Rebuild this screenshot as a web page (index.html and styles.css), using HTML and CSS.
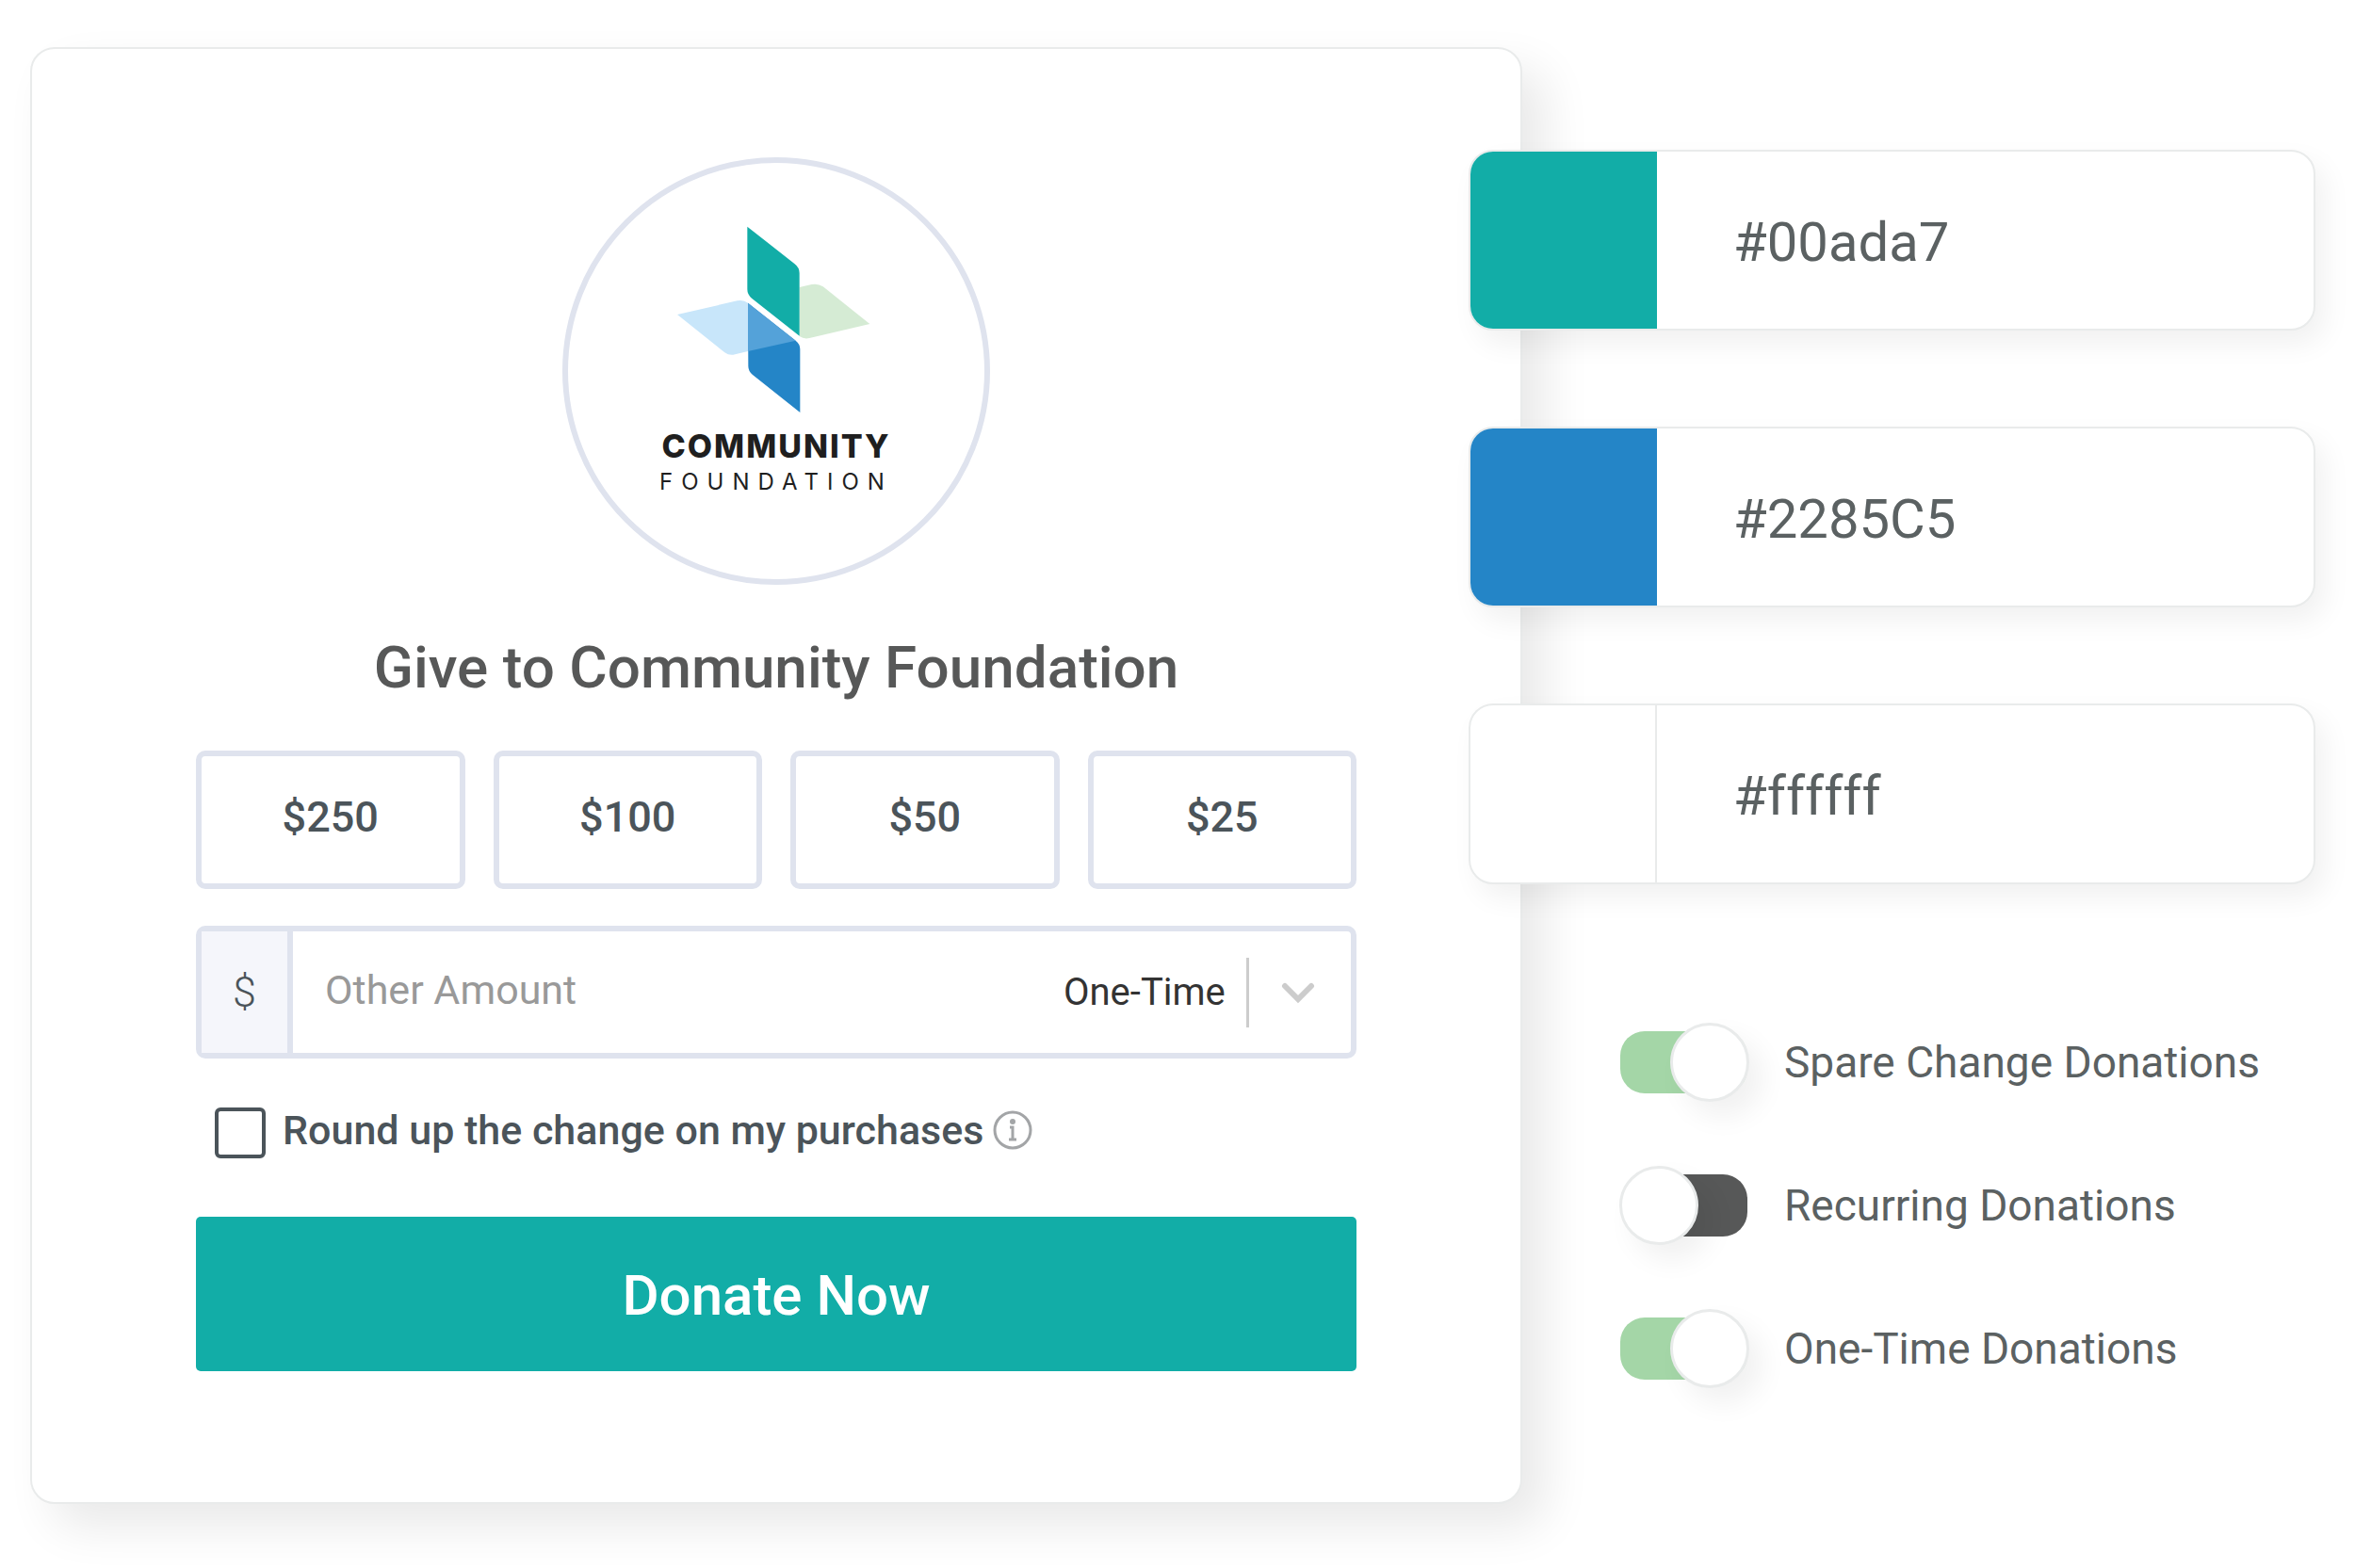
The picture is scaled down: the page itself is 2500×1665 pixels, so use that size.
FILE: index.html
```
<!DOCTYPE html>
<html lang="en">
  <head>
    <meta charset="UTF-8" />
    <meta name="viewport" content="width=device-width, initial-scale=1.0" />
    <title>Give to Community Foundation</title>

    <link rel="stylesheet" href="styles.css">
  </head>

  <body>
    <div class="page">
      <form class="card">
        <div class="logo">
          <svg class="logo-mark" viewBox="417 270 630 597" aria-hidden="true">
            <path fill="#d5ebd4" d="M806 465L845 456Q865 452 881 463L1030 582L838 627Q820 631 806 621Z" />
            <path fill="#c8e6fa" d="M417 552L608 508Q628 504 642 515V669L601 679Q583 684 568 673Z" />
            <path fill="#2485c7" d="M642 515L794 635Q808 646 808 662V864L657 744Q643 732 643 716Z" />
            <path fill="#54a2d9" d="M642 515L794 635L642 669Z" />
            <path fill="#12ada7" d="M640 272L790 390Q806 402 806 420V620L654 500Q640 489 640 472Z" />
          </svg>
          <span class="logo-name">COMMUNITY</span>
          <span class="logo-sub">FOUNDATION</span>
        </div>

        <h1 class="title">Give to Community Foundation</h1>

        <div class="amounts">
          <button type="button" class="amount">$250</button>
          <button type="button" class="amount">$100</button>
          <button type="button" class="amount">$50</button>
          <button type="button" class="amount">$25</button>
        </div>

        <div class="other">
          <label class="other-prefix" for="other">$</label>
          <input class="other-input" id="other" type="text" placeholder="Other Amount" />
          <select class="other-select" aria-label="Frequency">
            <option>One-Time</option>
          </select>
          <span class="other-line"></span>
          <svg class="other-arrow" viewBox="0 0 36 24" aria-hidden="true">
            <path d="M4 5L18 19L32 5" fill="none" stroke="#ccc" stroke-width="6" stroke-linecap="round" />
          </svg>
        </div>

        <div class="roundup">
          <input class="roundup-box" id="roundup" type="checkbox" />
          <label class="roundup-label" for="roundup">Round up the change on my purchases</label>
          <svg class="roundup-info" viewBox="0 0 42 42" aria-hidden="true">
            <circle cx="21" cy="21" r="19" fill="none" stroke="#a3a5a7" stroke-width="3" />
            <circle cx="21" cy="12" r="3" fill="#a3a5a7" />
            <path d="M18 18H21V31M17 31H25" fill="none" stroke="#a3a5a7" stroke-width="3" />
          </svg>
        </div>

        <button type="submit" class="donate">Donate Now</button>
      </form>

      <div class="settings">
        <div class="colors">
          <div class="color">
            <span class="swatch swatch-teal"></span>
            <input class="hex" type="text" value="#00ada7" aria-label="Primary color" />
          </div>
          <div class="color">
            <span class="swatch swatch-blue"></span>
            <input class="hex" type="text" value="#2285C5" aria-label="Secondary color" />
          </div>
          <div class="color">
            <span class="swatch swatch-white"></span>
            <input class="hex" type="text" value="#ffffff" aria-label="Background color" />
          </div>
        </div>

        <div class="toggles">
          <label class="toggle">
            <input class="switch" type="checkbox" checked />
            Spare Change Donations
          </label>
          <label class="toggle">
            <input class="switch" type="checkbox" />
            Recurring Donations
          </label>
          <label class="toggle">
            <input class="switch" type="checkbox" checked />
            One-Time Donations
          </label>
        </div>
      </div>
    </div>
  </body>
</html>
```
FILE: styles.css
```
*,
*::before {
  margin: 0;
  padding: 0;
  box-sizing: border-box;
  font-family: Roboto, sans-serif;
}
body {
  background: #fff;
}
.page {
  display: grid;
  grid-template-columns: 1584fr 842fr;
  align-items: start;
  padding: 50px 42px 66px 32px;
}

/* donation form */
.card {
  padding: 115px 174px 139px;
  background: #fff;
  border: 2px solid #e9ebeb;
  border-radius: 26px;
  box-shadow: 24px 24px 50px rgba(0, 0, 0, 0.09);
}
.logo {
  display: flex;
  flex-direction: column;
  align-items: center;
  margin: 0 auto;
  padding-top: 67px;
  width: 454px;
  height: 454px;
  border: 6px solid #dfe3ee;
  border-radius: 50%;
  color: #1f1f1f;
}
.logo-mark {
  width: 210px;
  height: 199px;
}
.logo-name {
  margin-top: 15px;
  font-family: Inter, sans-serif;
  font-weight: 800;
  font-size: 34px;
  line-height: 40px;
  letter-spacing: 2px;
}
.logo-sub {
  font-family: Inter, sans-serif;
  font-size: 24px;
  line-height: 36px;
  letter-spacing: 9px;
}
.title {
  margin: 48px 0;
  color: #575858;
  font-weight: 500;
  font-size: 62px;
  line-height: 80px;
  text-align: center;
}

.amounts {
  display: grid;
  grid-template-columns: repeat(4, 1fr);
  gap: 30px;
}
.amount {
  padding-bottom: 6px;
  height: 147px;
  background: #fff;
  border: 6px solid #dfe3ee;
  border-radius: 10px;
  color: #4b545a;
  font-weight: 500;
  font-size: 45px;
  cursor: pointer;
}

.other {
  display: flex;
  align-items: center;
  margin-top: 39px;
  padding-right: 38px;
  height: 141px;
  border: 6px solid #dfe3ee;
  border-radius: 10px;
}
.other-prefix {
  display: grid;
  place-items: center;
  align-self: stretch;
  width: 97px;
  background: #f5f6fb;
  border-right: 6px solid #dfe3ee;
  color: #4b545a;
  font-weight: 300;
  font-size: 45px;
}
.other-input {
  flex: 1;
  min-width: 0;
  padding: 0 34px 6px;
  border: none;
  outline: none;
  background: none;
  font-size: 43px;
}
.other-input::placeholder {
  color: #999;
}
.other-select {
  appearance: none;
  border: none;
  background: none;
  color: #333;
  font-size: 40px;
  cursor: pointer;
}
.other-line {
  margin: 0 34px 0 22px;
  width: 3px;
  height: 74px;
  background: #ccc;
}
.other-arrow {
  width: 36px;
  height: 24px;
}

.roundup {
  display: flex;
  align-items: center;
  margin: 52px 0 62px 20px;
}
.roundup-box {
  appearance: none;
  width: 54px;
  height: 54px;
  border: 4px solid #4b545a;
  border-radius: 6px;
}
.roundup-label {
  margin: 0 10px 0 18px;
  padding-bottom: 6px;
  color: #4b545a;
  font-weight: 500;
  font-size: 43px;
  line-height: 48px;
}
.roundup-info {
  margin-bottom: 6px;
  width: 42px;
  height: 42px;
}

.donate {
  display: block;
  padding-top: 2px;
  width: 100%;
  height: 164px;
  background: #12ada7;
  border: none;
  border-radius: 5px;
  color: #fff;
  font-weight: 500;
  font-size: 60px;
  cursor: pointer;
}

/* colors and switches */
.settings {
  padding-top: 109px;
}
.colors {
  display: grid;
  gap: 102px;
  margin-left: -57px;
}
.color {
  display: flex;
  height: 192px;
  overflow: hidden;
  background: #fff;
  border: 2px solid #e9ebeb;
  border-radius: 26px;
  box-shadow: 10px 14px 30px rgba(0, 0, 0, 0.06);
}
.swatch {
  flex: none;
  width: 198px;
}
.swatch-teal {
  background: #12ada7;
}
.swatch-blue {
  background: #2485c7;
}
.swatch-white {
  border-right: 2px solid #e9ebeb;
}
.hex {
  flex: 1;
  min-width: 0;
  padding: 4px 0 0 81px;
  border: none;
  outline: none;
  background: none;
  color: #5b6162;
  font-size: 58px;
  font-variant-ligatures: none;
}

.toggles {
  display: grid;
  gap: 86px;
  margin: 156px 0 0 104px;
}
.toggle {
  display: flex;
  align-items: center;
  gap: 39px;
  color: #5b6162;
  font-size: 46px;
  line-height: 66px;
}
.switch {
  appearance: none;
  position: relative;
  width: 135px;
  height: 66px;
  background: #575858;
  border-radius: 33px 26px 26px 33px;
  cursor: pointer;
}
.switch::before {
  content: '';
  position: absolute;
  top: -9px;
  left: -1px;
  width: 84px;
  height: 84px;
  background: #fff;
  border: 3px solid #e9ebeb;
  border-radius: 50%;
  box-shadow: 14px 16px 30px rgba(0, 0, 0, 0.06);
}
.switch:checked {
  background: #a4d6a7;
  border-radius: 26px;
}
.switch:checked::before {
  left: 53px;
}
```
